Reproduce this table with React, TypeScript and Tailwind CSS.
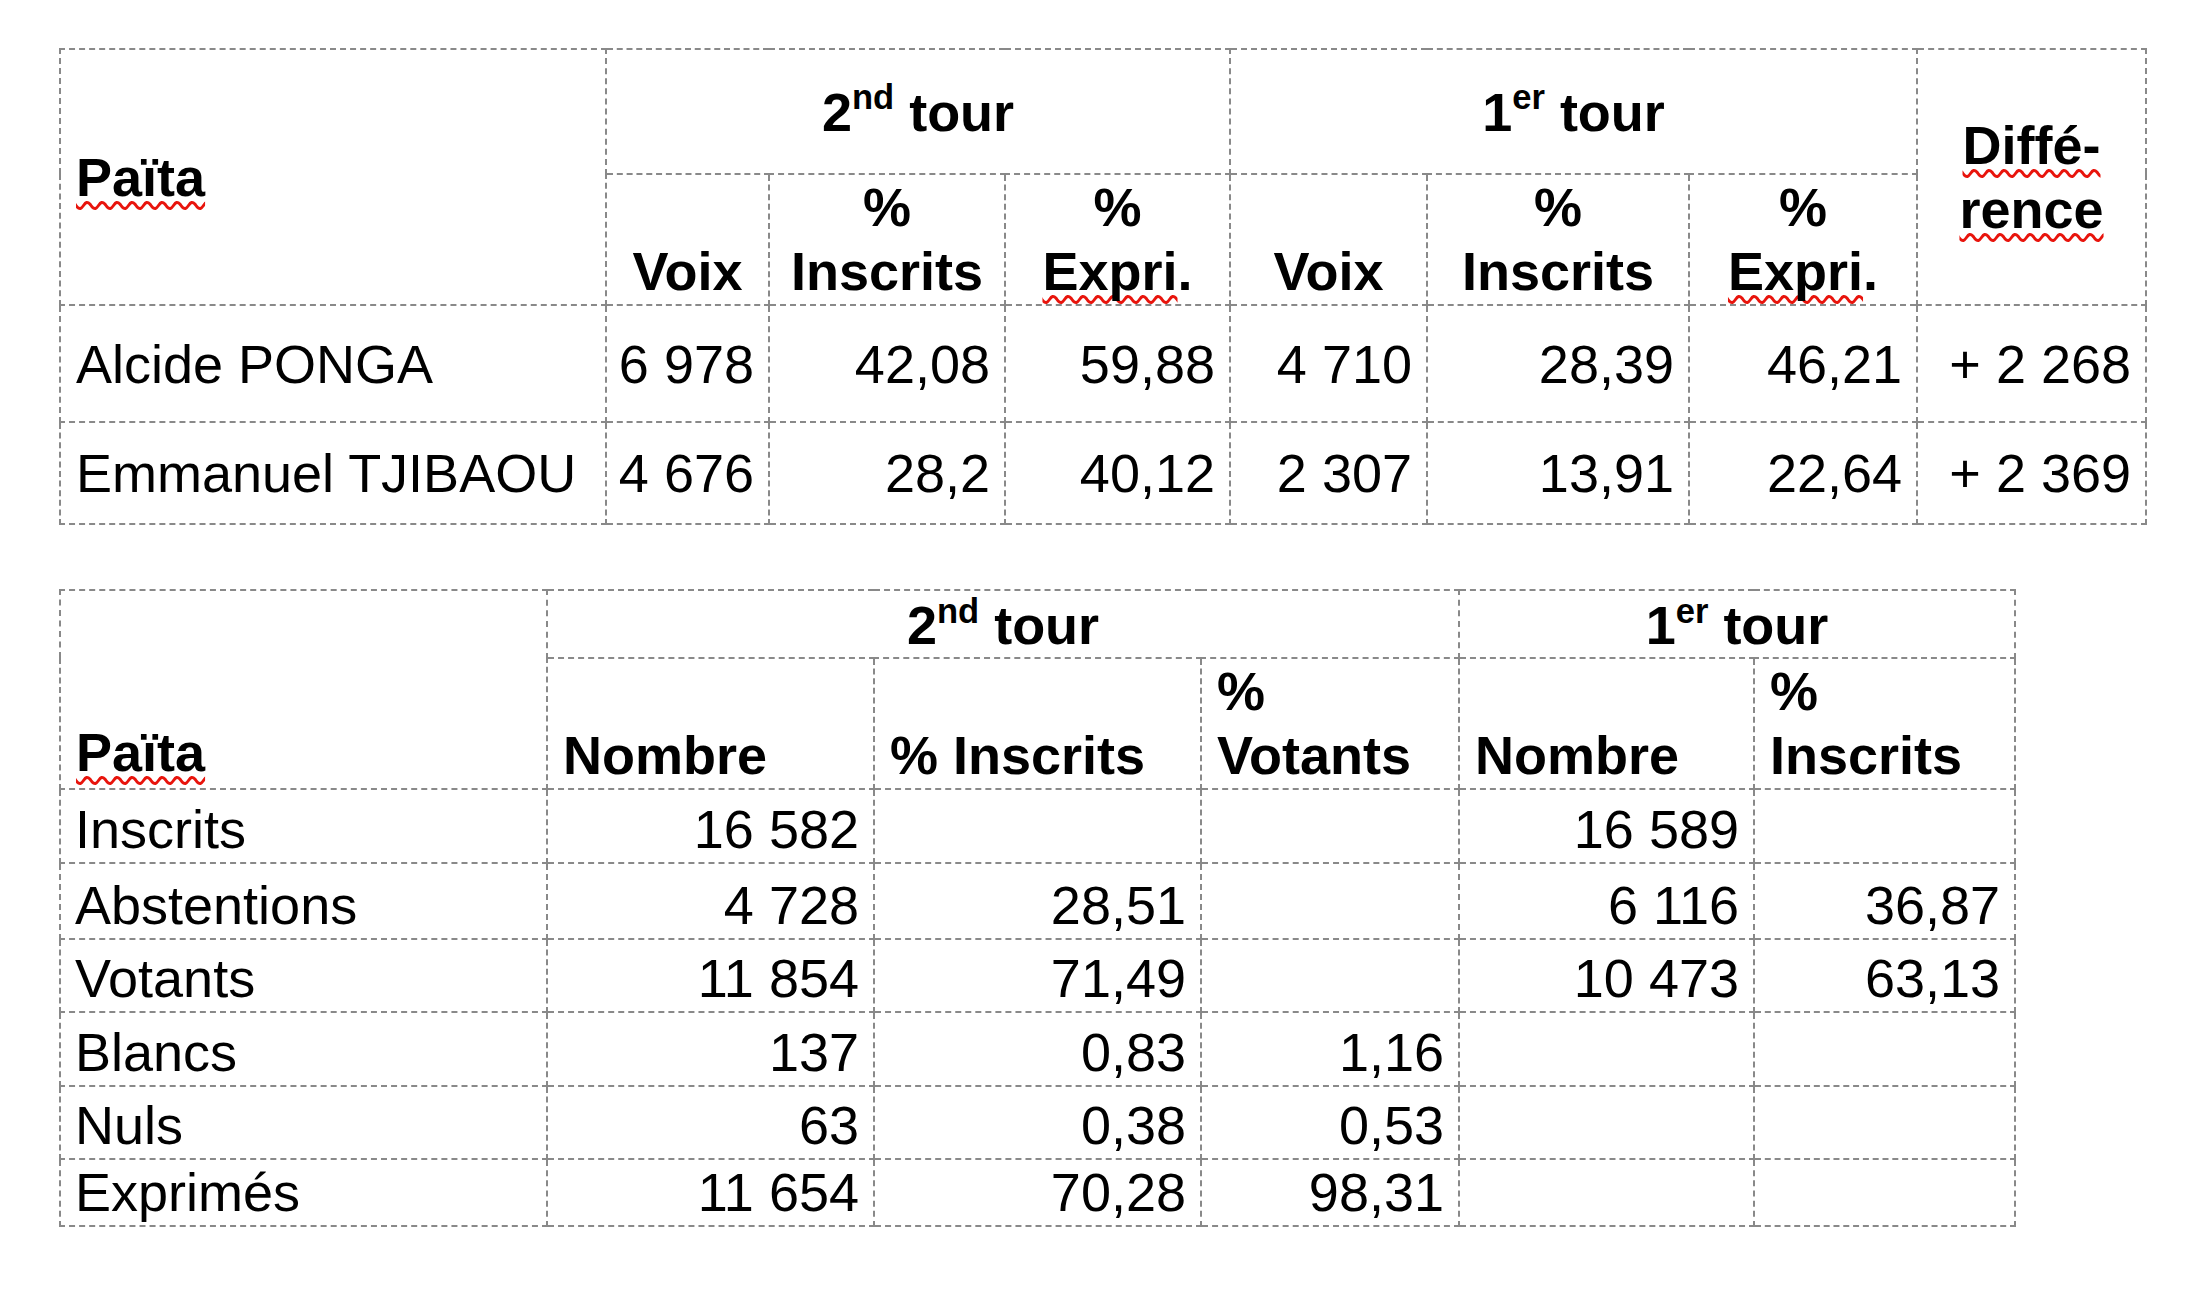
import type { ReactNode } from 'react';

const cell = 'border-2 border-dashed border-[#898989] p-0';
const wavy =
  'underline decoration-wavy decoration-[#e8140c] decoration-[3px] underline-offset-[5px] [text-decoration-skip-ink:none]';

const Sup = ({ children }: { children: ReactNode }) => (
  <sup className="text-[0.64em] top-[-0.62em]">{children}</sup>
);

const CANDIDATS = [
  { nom: 'Alcide PONGA', v2: '6 978', i2: '42,08', e2: '59,88', v1: '4 710', i1: '28,39', e1: '46,21', diff: '+ 2 268', h: 'h-[117px]' },
  { nom: 'Emmanuel TJIBAOU', v2: '4 676', i2: '28,2', e2: '40,12', v1: '2 307', i1: '13,91', e1: '22,64', diff: '+ 2 369', h: 'h-[102px]' },
];

const PARTICIPATION = [
  { label: 'Inscrits', n2: '16 582', i2: '', vt: '', n1: '16 589', i1: '', h: 'h-[74px]' },
  { label: 'Abstentions', n2: '4 728', i2: '28,51', vt: '', n1: '6 116', i1: '36,87', h: 'h-[76px]' },
  { label: 'Votants', n2: '11 854', i2: '71,49', vt: '', n1: '10 473', i1: '63,13', h: 'h-[73px]' },
  { label: 'Blancs', n2: '137', i2: '0,83', vt: '1,16', n1: '', i1: '', h: 'h-[74px]' },
  { label: 'Nuls', n2: '63', i2: '0,38', vt: '0,53', n1: '', i1: '', h: 'h-[73px]' },
  { label: 'Exprimés', n2: '11 654', i2: '70,28', vt: '98,31', n1: '', i1: '', h: 'h-[67px]' },
];

const ResultatsCandidats = () => (
  <table className="ml-[59px] mt-[48px] w-[2086px] table-fixed border-collapse">
    <colgroup>
      <col className="w-[546px]" />
      <col className="w-[163px]" />
      <col className="w-[236px]" />
      <col className="w-[225px]" />
      <col className="w-[197px]" />
      <col className="w-[262px]" />
      <col className="w-[228px]" />
      <col className="w-[229px]" />
    </colgroup>
    <thead className="font-bold">
      <tr className="h-[125px]">
        <td rowSpan={2} className={`${cell} pl-[15px] text-left align-middle`}>
          <span className={wavy}>Païta</span>
        </td>
        <td colSpan={3} className={`${cell} text-center align-middle`}>
          2<Sup>nd</Sup> tour
        </td>
        <td colSpan={3} className={`${cell} text-center align-middle`}>
          1<Sup>er</Sup> tour
        </td>
        <td rowSpan={2} className={`${cell} text-center align-middle`}>
          <span className={wavy}>Diffé-</span>
          <br />
          <span className={wavy}>rence</span>
        </td>
      </tr>
      <tr className="h-[124px]">
        {[0, 1].map(i => (
          <>
            <td key={`v${i}`} className={`${cell} pb-[1px] text-center align-bottom`}>Voix</td>
            <td key={`i${i}`} className={`${cell} pb-[1px] text-center align-bottom`}>
              %<br />Inscrits
            </td>
            <td key={`e${i}`} className={`${cell} pb-[1px] text-center align-bottom`}>
              %<br />
              <span className={wavy}>Expri</span>.
            </td>
          </>
        ))}
      </tr>
    </thead>
    <tbody>
      {CANDIDATS.map(c => (
        <tr key={c.nom} className={c.h}>
          <td className={`${cell} pl-[15px] text-left align-middle`}>{c.nom}</td>
          {[c.v2, c.i2, c.e2, c.v1, c.i1, c.e1, c.diff].map((val, idx) => (
            <td key={idx} className={`${cell} pr-[14px] text-right align-middle`}>{val}</td>
          ))}
        </tr>
      ))}
    </tbody>
  </table>
);

const Participation = () => (
  <table className="ml-[59px] mt-[64px] w-[1955px] table-fixed border-collapse">
    <colgroup>
      <col className="w-[487px]" />
      <col className="w-[327px]" />
      <col className="w-[327px]" />
      <col className="w-[258px]" />
      <col className="w-[295px]" />
      <col className="w-[261px]" />
    </colgroup>
    <thead className="font-bold">
      <tr className="h-[68px]">
        <td rowSpan={2} className={`${cell} pb-[4px] pl-[15px] text-left align-bottom`}>
          <span className={wavy}>Païta</span>
        </td>
        <td colSpan={3} className={`${cell} text-center align-bottom`}>
          2<Sup>nd</Sup> tour
        </td>
        <td colSpan={2} className={`${cell} text-center align-bottom`}>
          1<Sup>er</Sup> tour
        </td>
      </tr>
      <tr className="h-[123px]">
        <td className={`${cell} pb-[1px] pl-[15px] text-left align-bottom`}>Nombre</td>
        <td className={`${cell} pb-[1px] pl-[15px] text-left align-bottom`}>% Inscrits</td>
        <td className={`${cell} pb-[1px] pl-[15px] text-left align-bottom`}>
          %<br />Votants
        </td>
        <td className={`${cell} pb-[1px] pl-[15px] text-left align-bottom`}>Nombre</td>
        <td className={`${cell} pb-[1px] pl-[15px] text-left align-bottom`}>
          %<br />Inscrits
        </td>
      </tr>
    </thead>
    <tbody>
      {PARTICIPATION.map(r => (
        <tr key={r.label} className={r.h}>
          <td className={`${cell} pb-[1px] pl-[14px] text-left align-bottom`}>{r.label}</td>
          {[r.n2, r.i2, r.vt, r.n1, r.i1].map((val, idx) => (
            <td key={idx} className={`${cell} pb-[1px] pr-[14px] text-right align-bottom`}>{val}</td>
          ))}
        </tr>
      ))}
    </tbody>
  </table>
);

export default function App() {
  return (
    <div className="min-h-[1295px] w-[2200px] overflow-hidden bg-white font-['Liberation_Sans',Arial,sans-serif] text-[54px] leading-[64px] whitespace-nowrap text-black">
      <ResultatsCandidats />
      <Participation />
    </div>
  );
}
